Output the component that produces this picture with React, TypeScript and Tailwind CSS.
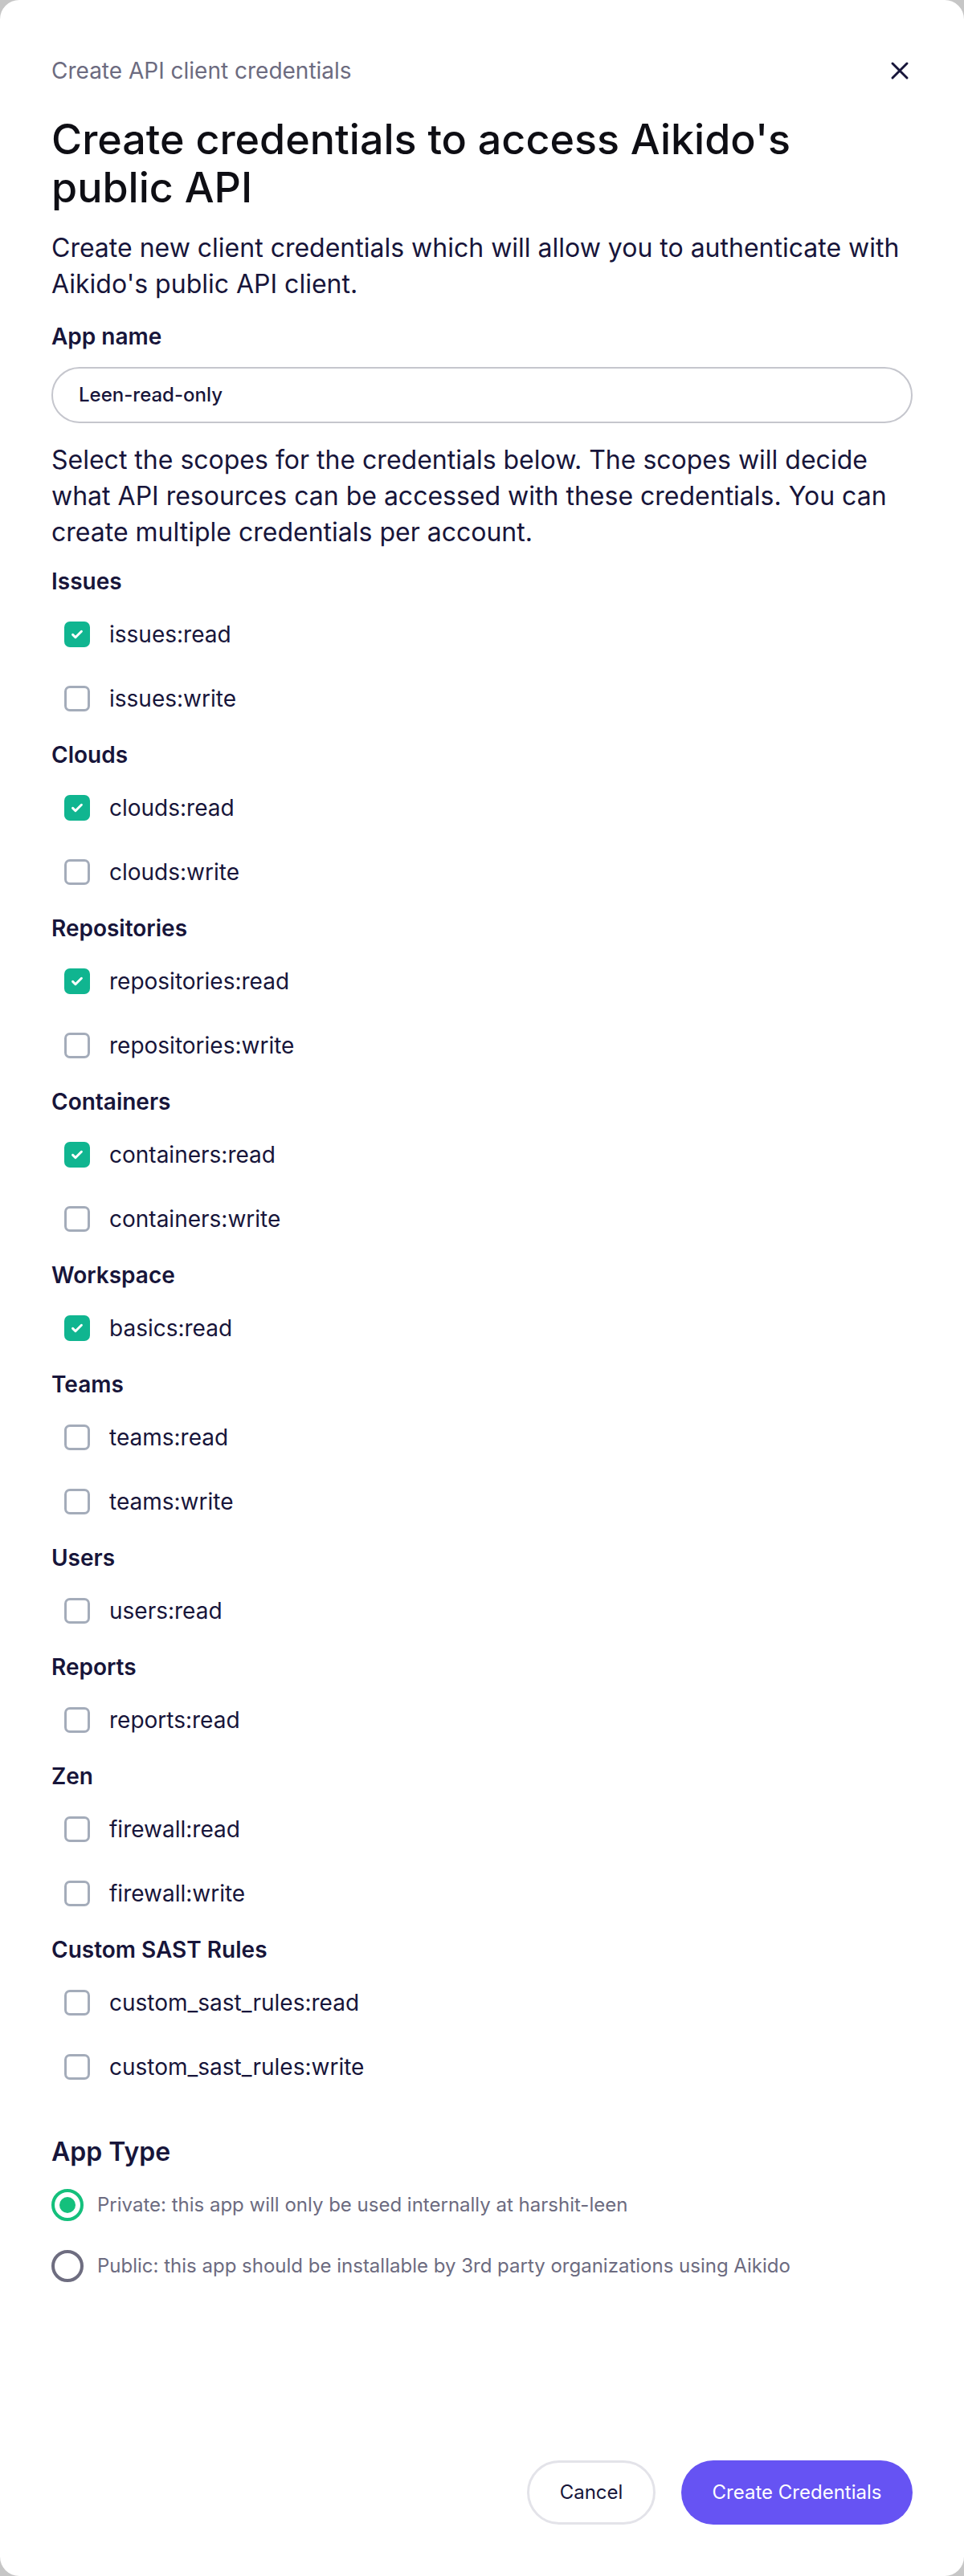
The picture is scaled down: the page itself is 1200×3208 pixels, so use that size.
import React from "react";

type Scope = { name: string; checked?: boolean };
type Group = { title: string; scopes: Scope[] };

const GROUPS: Group[] = [
  { title: "Issues", scopes: [{ name: "issues:read", checked: true }, { name: "issues:write" }] },
  { title: "Clouds", scopes: [{ name: "clouds:read", checked: true }, { name: "clouds:write" }] },
  {
    title: "Repositories",
    scopes: [{ name: "repositories:read", checked: true }, { name: "repositories:write" }],
  },
  {
    title: "Containers",
    scopes: [{ name: "containers:read", checked: true }, { name: "containers:write" }],
  },
  { title: "Workspace", scopes: [{ name: "basics:read", checked: true }] },
  { title: "Teams", scopes: [{ name: "teams:read" }, { name: "teams:write" }] },
  { title: "Users", scopes: [{ name: "users:read" }] },
  { title: "Reports", scopes: [{ name: "reports:read" }] },
  { title: "Zen", scopes: [{ name: "firewall:read" }, { name: "firewall:write" }] },
  {
    title: "Custom SAST Rules",
    scopes: [{ name: "custom_sast_rules:read" }, { name: "custom_sast_rules:write" }],
  },
];

function Checkbox({ checked }: { checked?: boolean }) {
  if (checked) {
    return (
      <span className="flex h-8 w-8 shrink-0 items-center justify-center rounded-[7px] bg-[#10b590]">
        <svg width="20" height="20" viewBox="0 0 24 24" fill="none">
          <path
            d="M5.5 12.5l4 4L18.5 7.5"
            stroke="white"
            strokeWidth="3.6"
            strokeLinecap="round"
            strokeLinejoin="round"
          />
        </svg>
      </span>
    );
  }
  return <span className="h-8 w-8 shrink-0 rounded-[7px] border-[3px] border-[#a4acba] bg-white" />;
}

function Radio({ selected, label }: { selected?: boolean; label: string }) {
  return (
    <label className="flex h-10 items-center gap-[17px]">
      {selected ? (
        <span className="flex h-10 w-10 shrink-0 items-center justify-center rounded-full border-4 border-[#14c07c]">
          <span className="h-5 w-5 rounded-full bg-[#14c07c]" />
        </span>
      ) : (
        <span className="h-10 w-10 shrink-0 rounded-full border-4 border-[#6e6d80]" />
      )}
      <span className="text-[24px] text-[#6c6b80]">{label}</span>
    </label>
  );
}

export default function App() {
  return (
    <div className="min-h-screen bg-[#c6c6c6] font-['Inter',sans-serif]">
      <div className="flex min-h-screen flex-col rounded-[24px] bg-white p-16">
        <div className="flex h-12 items-center justify-between">
          <span className="text-[28px] text-[#6c6b80]">Create API client credentials</span>
          <button className="-mr-[4px] flex h-10 w-10 items-center justify-center text-[#17153a]">
            <svg width="36" height="36" viewBox="0 0 24 24" fill="none">
              <path d="M18 6L6 18M6 6l12 12" stroke="currentColor" strokeWidth="2" strokeLinecap="round" />
            </svg>
          </button>
        </div>

        <h1 className="mt-8 text-[52px] font-medium leading-[60px] text-[#0e0e14]">
          Create credentials to access Aikido's public API
        </h1>

        <p className="mt-[22px] text-[32px] leading-[45px] text-[#17153a]">
          Create new client credentials which will allow you to authenticate with Aikido's public API
          client.
        </p>

        <label className="mt-[23px] block text-[28px] font-semibold leading-10 text-[#17153a]">
          App name
        </label>
        <div className="mt-[18px] flex h-[70px] items-center rounded-full border-2 border-[#c5c6cd] px-8">
          <span className="text-[24px] font-medium text-[#17153a]">Leen-read-only</span>
        </div>

        <p className="mt-[23px] text-[32px] leading-[45px] text-[#17153a]">
          Select the scopes for the credentials below. The scopes will decide what API resources can be
          accessed with these credentials. You can create multiple credentials per account.
        </p>

        <div className="mt-[19px] flex flex-col gap-[26px]">
          {GROUPS.map((g) => (
            <div key={g.title}>
              <div className="h-10 text-[28px] font-semibold leading-10 text-[#17153a]">{g.title}</div>
              <div className="mt-[22px] flex flex-col gap-8">
                {g.scopes.map((s) => (
                  <div key={s.name} className="flex h-12 items-center pl-4">
                    <Checkbox checked={s.checked} />
                    <span className="ml-6 text-[28px] text-[#17153a]">{s.name}</span>
                  </div>
                ))}
              </div>
            </div>
          ))}
        </div>

        <h2 className="mt-[60px] text-[32px] font-semibold leading-[44px] text-[#17153a]">App Type</h2>
        <div className="mt-6 flex flex-col gap-9">
          <Radio selected label="Private: this app will only be used internally at harshit-leen" />
          <Radio label="Public: this app should be installable by 3rd party organizations using Aikido" />
        </div>

        <div className="mt-auto flex justify-end gap-8 pt-10">
          <button className="h-20 w-40 rounded-full border-[3px] border-[#e3e3e9] bg-white text-[24px] text-[#17153a]">
            Cancel
          </button>
          <button className="h-20 w-72 rounded-full bg-[#6653f3] text-[24px] text-white">
            Create Credentials
          </button>
        </div>
      </div>
    </div>
  );
}
